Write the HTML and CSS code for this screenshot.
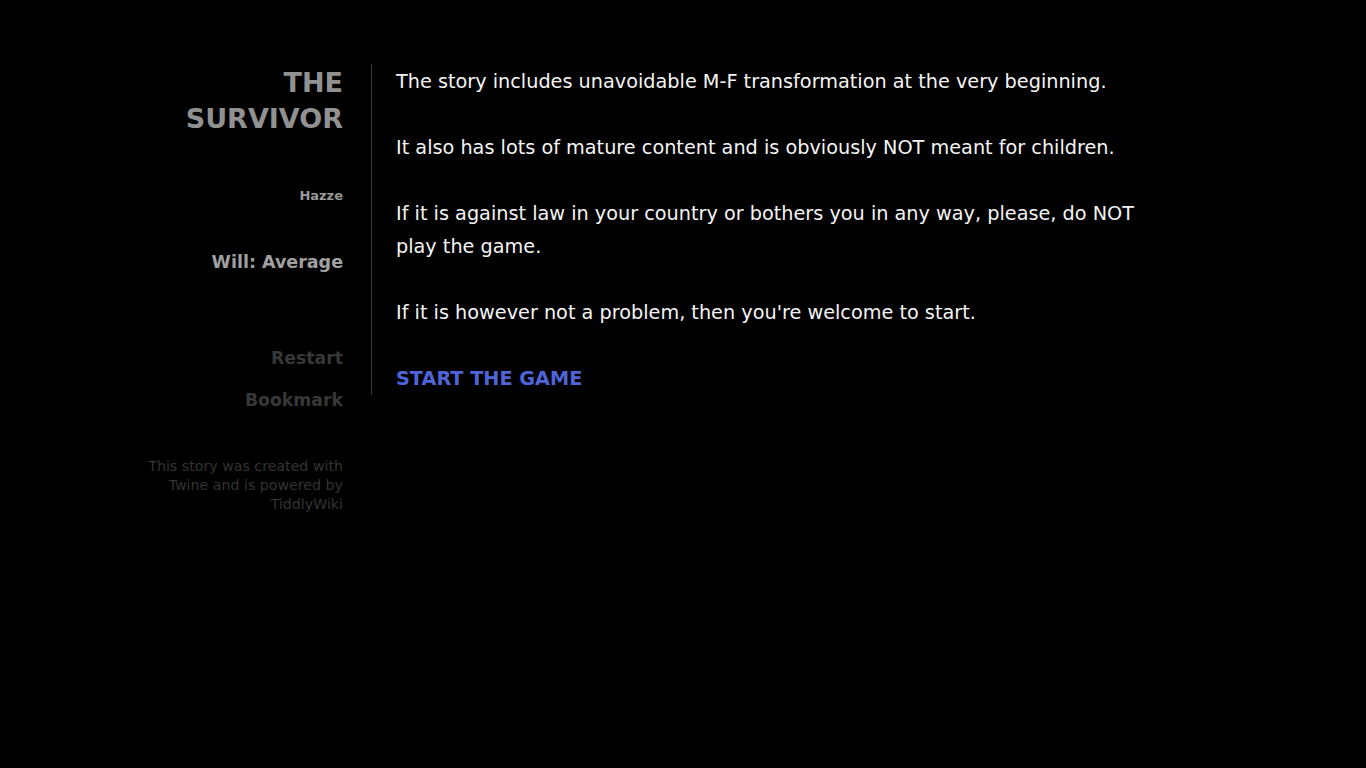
FILE: index.html
```html
<!DOCTYPE html>
<html lang="en">
<head>
<meta charset="utf-8">
<title>The Survivor</title>
<link rel="stylesheet" href="styles.css">
</head>
<body>
<div class="page">
  <aside class="sidebar">
    <h1 class="title">THE SURVIVOR</h1>
    <div class="author">Hazze</div>
    <div class="stat">Will: Average</div>
    <ul class="menu">
      <li><a class="menu-link" href="#">Restart</a></li>
      <li><a class="menu-link" href="#">Bookmark</a></li>
    </ul>
    <p class="credits">This story was created with Twine and is powered by TiddlyWiki</p>
  </aside>
  <main class="passages">
    <div class="passage">
      <p class="para">The story includes unavoidable M-F transformation at the very beginning.</p>
      <p class="para">It also has lots of mature content and is obviously NOT meant for children.</p>
      <p class="para">If it is against law in your country or bothers you in any way, please, do NOT play the game.</p>
      <p class="para">If it is however not a problem, then you're welcome to start.</p>
      <p class="para"><a class="internal-link" href="#">START THE GAME</a></p>
    </div>
  </main>
</div>
</body>
</html>
```
FILE: styles.css
```css
html, body {
  margin: 0;
  padding: 0;
  background: #000;
}
body {
  font-family: "DejaVu Sans", Verdana, sans-serif;
  color: #f4f4f4;
  min-height: 768px;
}
.page {
  display: flex;
  align-items: flex-start;
  padding-top: 64px;
}
.sidebar {
  margin-left: 140px;
  width: 203px;
  text-align: right;
  flex-shrink: 0;
}
.title {
  margin: 0;
  padding-top: 1px;
  font-size: 27px;
  line-height: 36px;
  font-weight: bold;
  color: #919191;
  padding-left: 30px;
}
.author {
  margin-top: 51px;
  font-size: 13px;
  line-height: 16px;
  font-weight: bold;
  color: #999;
}
.stat {
  margin-top: 44px;
  font-size: 17.5px;
  line-height: 28px;
  font-weight: bold;
  color: #a0a0a0;
}
.menu {
  list-style: none;
  margin: 68px 0 0;
  padding: 0;
}
.menu li {
  line-height: 28px;
  margin-bottom: 14px;
}
.menu li + li {
  margin-top: -1px;
}
.menu-link {
  font-size: 17.3px;
  font-weight: bold;
  color: #383838;
  text-decoration: none;
}
.credits {
  margin: 42px 0 0;
  font-size: 14.2px;
  line-height: 19px;
  color: #333;
}
.passages {
  margin-left: 28px;
  border-left: 1px solid #3a3a3a;
  padding-left: 24px;
  width: 760px;
}
.passage {
  font-size: 19.25px;
  line-height: 33px;
  padding-top: 1px;
}
.para {
  margin: 0 0 33px;
}
.para:last-child {
  margin-bottom: 0;
}
.internal-link {
  color: #5064d8;
  font-weight: bold;
  text-decoration: none;
}
```
